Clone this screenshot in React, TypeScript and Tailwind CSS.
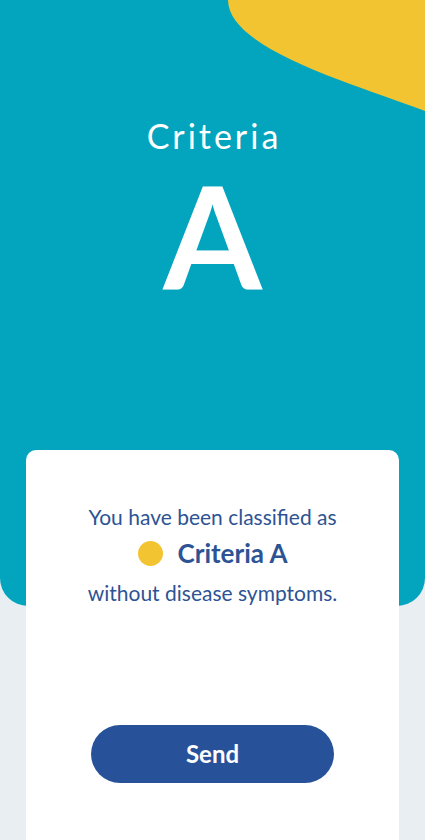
import React from "react";

const font = { fontFamily: "Lato, 'Noto Sans', sans-serif" };

const Blob = () => (
  <svg
    className="absolute right-0 top-0"
    width="425"
    height="120"
    viewBox="0 0 425 120"
  >
    <path d="M228 0 C228 50 360 86 425 111 L425 0 Z" fill="#F2C431" />
  </svg>
);

export default function App() {
  return (
    <div className="min-h-screen bg-[#e9eef2]" style={font}>
      {/* header */}
      <div className="relative h-[606px] overflow-hidden rounded-b-[28px] bg-[#03a5be]">
        <Blob />
        <div className="relative flex flex-col items-center pt-[112px] text-white">
          <p className="pl-[3px] text-[34px] font-normal leading-[48px] tracking-[3px]">Criteria</p>
          <p className="mt-[9px] text-[142px] font-bold leading-[130px]">A</p>
        </div>
      </div>

      {/* result card */}
      <div className="relative mx-[26px] -mt-[156px] flex h-[390px] flex-col items-center rounded-t-[10px] bg-white pt-[53px] text-[#2d5394]">
        <p className="text-[21px] leading-[28px]">You have been classified as</p>
        <div className="mt-[7px] flex items-center gap-[15px]">
          <span className="h-[25px] w-[25px] rounded-full bg-[#f2c431]" />
          <span className="text-[26px] font-bold leading-[30px]">Criteria A</span>
        </div>
        <p className="mt-[11px] text-[21px] leading-[28px]">without disease symptoms.</p>

        <button className="mt-[118px] h-[58px] w-[243px] rounded-full bg-[#27529a] text-[24px] font-bold text-white">
          Send
        </button>
      </div>
    </div>
  );
}
